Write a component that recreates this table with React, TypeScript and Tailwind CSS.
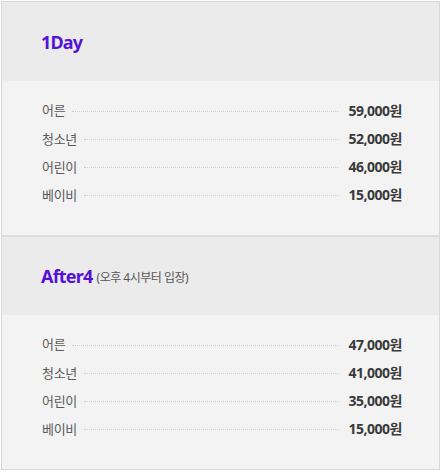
const FONT = "font-['Noto_Sans','Noto_Sans_CJK_KR',sans-serif]";

type Price = { label: string; price: string };

const sections: { title: string; note?: string; rows: Price[] }[] = [
  {
    title: "1Day",
    rows: [
      { label: "어른", price: "59,000원" },
      { label: "청소년", price: "52,000원" },
      { label: "어린이", price: "46,000원" },
      { label: "베이비", price: "15,000원" },
    ],
  },
  {
    title: "After4",
    note: "(오후 4시부터 입장)",
    rows: [
      { label: "어른", price: "47,000원" },
      { label: "청소년", price: "41,000원" },
      { label: "어린이", price: "35,000원" },
      { label: "베이비", price: "15,000원" },
    ],
  },
];

export default function App() {
  return (
    <div className={`min-h-[473px] bg-white pt-px pl-px ${FONT}`}>
      <div className="w-[439px] border border-[#d8d8d8]">
        {sections.map((s, i) => (
          <div key={s.title} className={i > 0 ? "border-t-2 border-[#dcdcdc]" : ""}>
            <div
              className={`flex items-center bg-[#ebebeb] px-[39px] ${
                i === 0 ? "h-[79px]" : "h-[78px]"
              }`}
            >
              <span className="text-[18px] font-bold leading-none tracking-[-0.8px] text-[#5511d9]">
                {s.title}
              </span>
              {s.note && (
                <span className="ml-[4px] mt-[3px] text-[12px] leading-none tracking-[-0.5px] text-[#555]">
                  {s.note}
                </span>
              )}
            </div>
            <div className="h-[154px] bg-[#f3f3f3] pl-[40px] pr-[37px] pt-[15px]">
              {s.rows.map((r, j) => (
                <div key={r.label} className={`flex items-center ${j === 0 ? "h-[29px]" : "h-7"}`}>
                  <span className="text-[13px] leading-none tracking-[-0.3px] text-[#5a5a5a]">
                    {r.label}
                  </span>
                  <span className="ml-[7px] mr-[11px] mt-px flex-1 border-t border-dotted border-[#cfcfcf]" />
                  <span className="text-[14px] font-bold leading-none tracking-[-0.5px] text-[#3a3a3a]">
                    {r.price}
                  </span>
                </div>
              ))}
            </div>
          </div>
        ))}
      </div>
    </div>
  );
}
